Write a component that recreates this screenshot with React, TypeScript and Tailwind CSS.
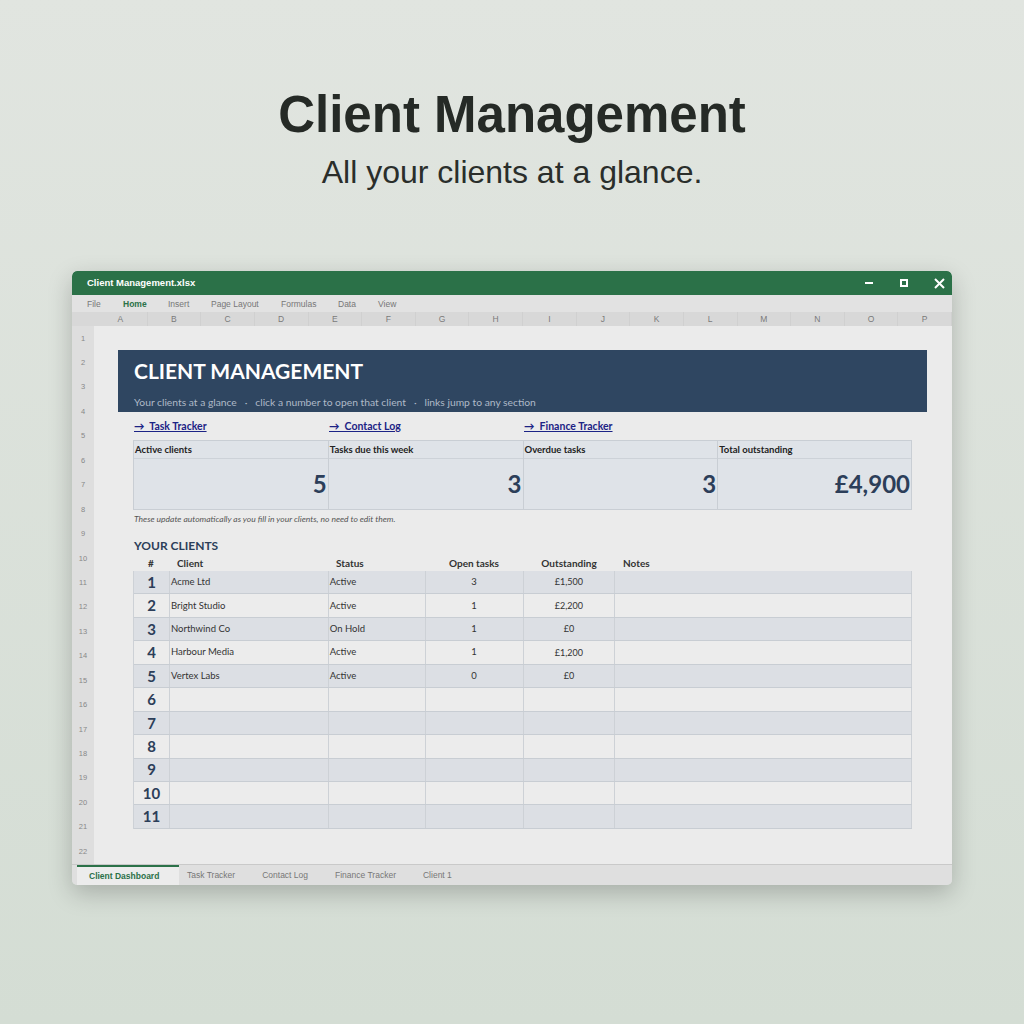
import React from "react";

const COLS = "ABCDEFGHIJKLMNOP".split("");
const MENU = ["File", "Home", "Insert", "Page Layout", "Formulas", "Data", "View"];
const TABS = ["Client Dashboard", "Task Tracker", "Contact Log", "Finance Tracker", "Client 1"];

const KPIS = [
  { label: "Active clients", value: "5", link: "Task Tracker" },
  { label: "Tasks due this week", value: "3", link: "Contact Log" },
  { label: "Overdue tasks", value: "3", link: "Finance Tracker" },
  { label: "Total outstanding", value: "£4,900", link: "" },
];

const CLIENTS = [
  { name: "Acme Ltd", status: "Active", tasks: "3", owed: "£1,500" },
  { name: "Bright Studio", status: "Active", tasks: "1", owed: "£2,200" },
  { name: "Northwind Co", status: "On Hold", tasks: "1", owed: "£0" },
  { name: "Harbour Media", status: "Active", tasks: "1", owed: "£1,200" },
  { name: "Vertex Labs", status: "Active", tasks: "0", owed: "£0" },
];

const chrome = { fontFamily: '"Liberation Sans", Arial, sans-serif' };
const lato = { fontFamily: 'Lato, "Noto Sans", sans-serif' };

function TitleBar() {
  return (
    <div className="flex h-[24px] items-center justify-between rounded-t-[5px] bg-[#2b7148] pl-[15px] text-white">
      <span className="text-[9.5px] font-bold">Client Management.xlsx</span>
      <div className="flex items-center gap-[9px]">
        <div className="flex w-[26px] justify-center">
          <div className="h-[2px] w-[8px] bg-white" />
        </div>
        <div className="flex w-[26px] justify-center">
          <div className="h-[8px] w-[8px] border-[2px] border-white" />
        </div>
        <div className="flex w-[26px] justify-center">
          <svg width="11" height="11" viewBox="0 0 11 11">
            <path d="M1 1 L10 10 M10 1 L1 10" stroke="white" strokeWidth="2" />
          </svg>
        </div>
      </div>
    </div>
  );
}

function MenuBar() {
  const pos = [15, 51, 96, 139, 209, 266, 306];
  return (
    <div className="relative h-[17px] bg-[#e2e2e2] text-[8.5px] text-[#777]">
      {MENU.map((m, i) => (
        <span
          key={m}
          className={`absolute top-[3px] ${m === "Home" ? "font-bold text-[#2b7148]" : ""}`}
          style={{ left: pos[i] }}
        >
          {m}
        </span>
      ))}
    </div>
  );
}

function ColumnHeaders() {
  return (
    <div className="flex h-[14px] bg-[#d8d8d8]">
      <div className="w-[22px] shrink-0" />
      {COLS.map((c) => (
        <div key={c} className="flex flex-1 items-center justify-center border-r border-[#d0d0d0] text-[8.5px] text-[#7a7a7a]">
          {c}
        </div>
      ))}
    </div>
  );
}

function Banner() {
  return (
    <div className="flex h-[62px] w-[809px] flex-col bg-[#2f4661] pl-[16px] pt-[9px]">
      <div className="text-[21px] font-bold leading-[24px] text-white">CLIENT MANAGEMENT</div>
      <div className="mt-[12px] whitespace-pre text-[10.3px] leading-[14px] text-[#aeb9c7]">
        {"Your clients at a glance   ·   click a number to open that client   ·   links jump to any section"}
      </div>
    </div>
  );
}

function Kpis() {
  const widths = ["w-[195px]", "w-[195px]", "w-[195px]", "w-[194px]"];
  return (
    <div className="ml-[15px] w-[779px]">
      <div className="flex h-[28px] items-center pb-[4px]">
        {KPIS.map((k, i) => (
          <div key={k.label} className={`${widths[i]} pl-[1px]`}>
            {k.link && (
              <span className="whitespace-pre text-[10.5px] font-bold text-[#1c2385] underline">
                {"→  " + k.link}
              </span>
            )}
          </div>
        ))}
      </div>
      <div className="flex border-l border-t border-[#c9ced4] bg-[#dfe3e8]">
        {KPIS.map((k, i) => (
          <div key={k.label} className={`${widths[i]} border-r border-b border-[#c9ced4]`}>
            <div className="h-[18px] border-b border-[#cdd2d8] pl-[1px] text-[9.5px] font-bold leading-[17px] text-[#222]">
              {k.label}
            </div>
            <div className="flex h-[50px] items-center justify-end pr-[1px] text-[24px] font-bold text-[#2c3e59]">
              {k.value}
            </div>
          </div>
        ))}
      </div>
      <div className="h-[18px] pl-[1px] text-[8.5px] italic leading-[18px] text-[#555]">
        These update automatically as you fill in your clients, no need to edit them.
      </div>
    </div>
  );
}

function ClientTable() {
  const w = ["w-[36px]", "w-[159px]", "w-[97px]", "w-[98px]", "w-[92px]", "w-[297px]"];
  const rows = Array.from({ length: 11 }, (_, i) => ({ n: i + 1, c: CLIENTS[i] }));
  return (
    <div className="ml-[15px] w-[779px]">
      <div className="mt-[9px] h-[18px] pl-[1px] text-[12px] font-bold leading-[18px] text-[#2c3e59]">YOUR CLIENTS</div>
      <div className="mt-[1px] flex h-[15px] items-center text-[10px] font-bold text-[#333]">
        <div className={`${w[0]} text-center`}>#</div>
        <div className={`${w[1]} pl-[8px]`}>Client</div>
        <div className={`${w[2]} pl-[8px]`}>Status</div>
        <div className={`${w[3]} text-center`}>Open tasks</div>
        <div className={`${w[4]} text-center`}>Outstanding</div>
        <div className={`${w[5]} pl-[8px]`}>Notes</div>
      </div>
      <div className="border-l border-[#cdd1d6]">
        {rows.map((r) => (
          <div
            key={r.n}
            className={`flex h-[23.45px] border-b border-[#c8cdd3] text-[9.5px] text-[#333] ${
              r.n % 2 === 1 ? "bg-[#dcdfe4]" : "bg-[#ececec]"
            }`}
          >
            <div className={`${w[0]} flex items-center justify-center border-r border-[#cdd1d6] text-[15px] font-bold text-[#2c3e59]`}>
              {r.n}
            </div>
            <div className={`${w[1]} flex items-center border-r border-[#cdd1d6] pl-[1px]`}>{r.c?.name}</div>
            <div className={`${w[2]} flex items-center border-r border-[#cdd1d6] pl-[1px]`}>{r.c?.status}</div>
            <div className={`${w[3]} flex items-center justify-center border-r border-[#cdd1d6]`}>{r.c?.tasks}</div>
            <div className={`${w[4]} flex items-center justify-center border-r border-[#cdd1d6] text-[9px]`}>{r.c?.owed}</div>
            <div className={`${w[5]} border-r border-[#cdd1d6]`} />
          </div>
        ))}
      </div>
    </div>
  );
}

function Sheet() {
  return (
    <div className="flex h-[538px]">
      <div className="w-[22px] shrink-0 bg-[#dedede]" style={chrome}>
        {Array.from({ length: 22 }, (_, i) => (
          <div key={i} className="flex h-[24.45px] items-center justify-center text-[7.5px] text-[#888]">
            {i + 1}
          </div>
        ))}
      </div>
      <div className="flex-1 bg-[#ebebeb] pl-[24px] pt-[24px]" style={lato}>
        <Banner />
        <Kpis />
        <ClientTable />
      </div>
    </div>
  );
}

function SheetTabs() {
  return (
    <div className="flex h-[21px] border-t border-[#c9c9c9] bg-[#dfdfdf] pl-[5px] text-[8.5px] text-[#777]">
      {TABS.map((t, i) =>
        i === 0 ? (
          <div key={t} className="flex w-[102px] items-center border-t-2 border-[#2b7148] bg-[#ececec] pl-[12px] font-bold text-[#2b7148]">
            {t}
          </div>
        ) : (
          <div key={t} className="flex items-center pl-[8px] pr-[19px]">
            {t}
          </div>
        )
      )}
    </div>
  );
}

export default function App() {
  return (
    <div className="flex h-[1024px] w-[1024px] flex-col items-center bg-gradient-to-b from-[#e1e5e0] to-[#d4ddd4]" style={chrome}>
      <h1 className="mt-[84px] text-[51px] font-bold leading-[62px] text-[#252a26]">Client Management</h1>
      <p className="mt-[6px] text-[32px] leading-[40px] text-[#2a2e2b]">All your clients at a glance.</p>
      <div className="ml-[72px] mt-[79px] w-[880px] self-start overflow-hidden rounded-[5px] shadow-[0_8px_24px_rgba(0,0,0,0.22)]">
        <TitleBar />
        <MenuBar />
        <ColumnHeaders />
        <Sheet />
        <SheetTabs />
      </div>
    </div>
  );
}
